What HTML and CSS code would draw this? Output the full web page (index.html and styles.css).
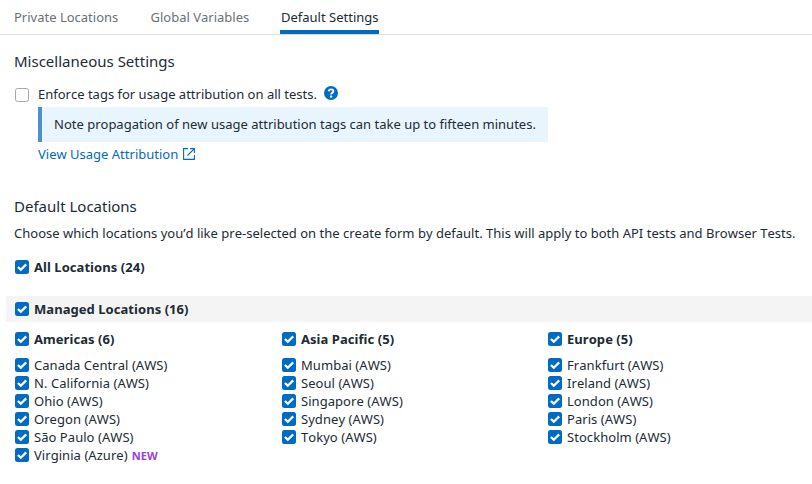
FILE: index.html
```html
<!DOCTYPE html>
<html lang="en"><head><meta charset="utf-8"><title>Default Settings</title><link rel="stylesheet" href="styles.css"></head>
<body>
<svg class="defs"><symbol id="check" viewBox="0 0 14 14"><rect width="14" height="14" rx="2.5" fill="#006bc2"/><path d="M2.900 7 5.800 9.700 11.200 4.400" fill="none" stroke="#fff" stroke-width="2.300"/></symbol></svg>
<nav class="tabs"><a class="t1">Private Locations</a><a class="t2">Global Variables</a><a class="t3 active">Default Settings</a></nav>
<main>
<h2 class="misc">Miscellaneous Settings</h2>
<div class="enforce"><span class="box"></span><span class="enforce-text">Enforce tags for usage attribution on all tests.</span><svg class="help" viewBox="0 0 14 14"><circle cx="7" cy="7" r="7" fill="#006bc2"/><path d="M4.700 5.300C4.900 3.900 5.800 3.400 7 3.400s2.300.7 2.300 1.900C9.300 6.800 7.100 6.600 7.100 8.500" fill="none" stroke="#fff" stroke-width="1.900"/><circle cx="7.100" cy="10.600" r="1.200" fill="#fff"/></svg></div>
<div class="note"><span>Note propagation of new usage attribution tags can take up to fifteen minutes.</span></div>
<a class="link"><span>View Usage Attribution</span><svg viewBox="0 0 12 12"><path d="M5 .6H.6v10.800h10.800V7M7 .6h4.400V5M11.200.8 4.500 7.500" fill="none" stroke="#006bc2" stroke-width="1.100"/></svg></a>
<h2 class="def">Default Locations</h2>
<p class="desc"><span>Choose which locations you’d like pre-selected on the create form by default. This will apply to both API tests and Browser Tests.</span></p>
<div class="row all"><svg><use href="#check"/></svg><b>All Locations (24)</b></div>
<div class="row managed"><svg><use href="#check"/></svg><b>Managed Locations (16)</b></div>
<div class="columns">
<section><div class="row head"><svg><use href="#check"/></svg><b>Americas (6)</b></div>
<div class="row"><svg><use href="#check"/></svg><span>Canada Central (AWS)</span></div>
<div class="row"><svg><use href="#check"/></svg><span>N. California (AWS)</span></div>
<div class="row"><svg><use href="#check"/></svg><span>Ohio (AWS)</span></div>
<div class="row"><svg><use href="#check"/></svg><span>Oregon (AWS)</span></div>
<div class="row"><svg><use href="#check"/></svg><span>São Paulo (AWS)</span></div>
<div class="row"><svg><use href="#check"/></svg><span>Virginia (Azure)</span><em>NEW</em></div></section>
<section><div class="row head"><svg><use href="#check"/></svg><b>Asia Pacific (5)</b></div>
<div class="row"><svg><use href="#check"/></svg><span>Mumbai (AWS)</span></div>
<div class="row"><svg><use href="#check"/></svg><span>Seoul (AWS)</span></div>
<div class="row"><svg><use href="#check"/></svg><span>Singapore (AWS)</span></div>
<div class="row"><svg><use href="#check"/></svg><span>Sydney (AWS)</span></div>
<div class="row"><svg><use href="#check"/></svg><span>Tokyo (AWS)</span></div></section>
<section><div class="row head"><svg><use href="#check"/></svg><b>Europe (5)</b></div>
<div class="row"><svg><use href="#check"/></svg><span>Frankfurt (AWS)</span></div>
<div class="row"><svg><use href="#check"/></svg><span>Ireland (AWS)</span></div>
<div class="row"><svg><use href="#check"/></svg><span>London (AWS)</span></div>
<div class="row"><svg><use href="#check"/></svg><span>Paris (AWS)</span></div>
<div class="row"><svg><use href="#check"/></svg><span>Stockholm (AWS)</span></div></section>
</div>
</main></body></html>
```
FILE: styles.css
```css
*{box-sizing:border-box}
body{margin:0;width:812px;height:484px;overflow:hidden;background:#fff;color:#1c2b34;font:13px/18px "Noto Sans",sans-serif;white-space:nowrap;font-kerning:none}
.defs{display:none}
.tabs{display:flex;height:35px;border-bottom:1px solid #dcdfe1;padding:0 14px;color:#6a7176;line-height:34px}
.tabs a{height:34px}
.t1{width:136px}
.t2{width:130px;padding-left:.5px}
.active{width:99px;padding-left:1px;border-bottom:4px solid #006bc2;color:#1c2b34}
h2{margin:0;padding-left:14px;font-size:15px;line-height:20px;font-weight:400}
.misc{margin-top:16px}
.enforce{display:flex;align-items:center;height:18px;margin:14px 0 0 15px}
.box{width:14px;height:14px;border:1px solid #a5a8ab;border-radius:2.5px;margin:2px 9px 0 0}
.help{width:14px;height:14px;margin:-3px 0 0 7px}
.note{width:510px;height:35px;margin:4px 0 0 38px;border-left:4px solid #4b90d0;background:#e9f5fc;padding-left:12px;line-height:35px}
.link{display:flex;align-items:center;margin:3px 0 0 38px;height:18px;color:#006bc2}
.link svg{width:12px;height:12px;margin-left:5px}
.def{margin-top:33px}
.desc{margin:8px 0 0 14px;letter-spacing:.008px}
.row{display:flex;align-items:center;height:18px;padding-left:15px;letter-spacing:.05px}
.row svg{width:14px;height:14px;margin-right:5px;flex:none}
.row b{font-weight:700}
.all{margin-top:16px}
.managed{height:26px;margin:20px 0 0 6px;padding-left:9px;background:#f4f4f4}
.columns{display:grid;grid-template-columns:267px 266px 1fr;margin-top:8px}
.head{margin-bottom:8px}
.row em{font-style:normal;font-size:11px;font-weight:700;color:#963de5;margin:1px 0 0 4px}
```
